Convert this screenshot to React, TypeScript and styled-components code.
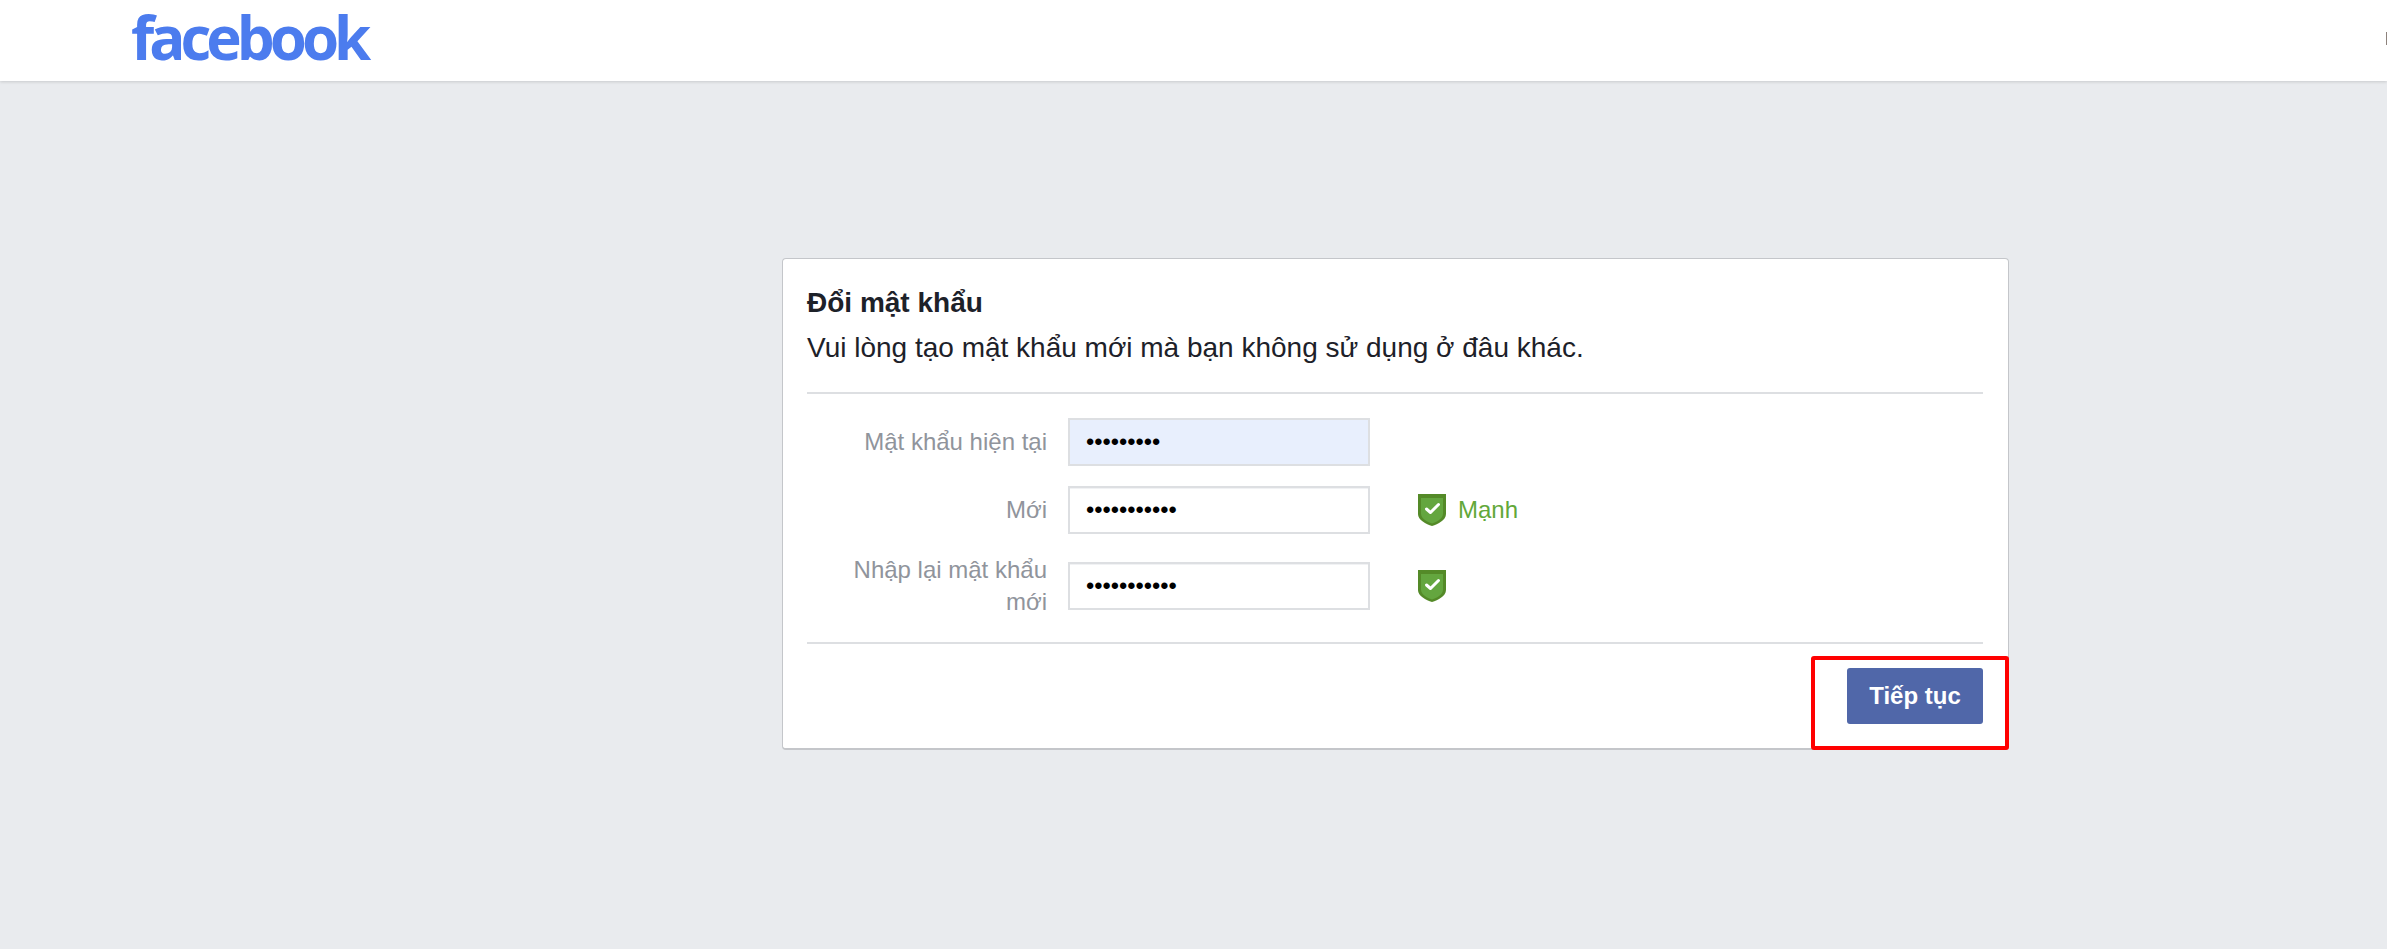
import React from 'react';
import styled, { createGlobalStyle } from 'styled-components';

const GlobalStyle = createGlobalStyle`
  html, body {
    margin: 0;
    padding: 0;
    background-color: #e9ebee;
    font-family: 'Liberation Sans', Arial, sans-serif;
  }
`;

const ShieldIcon: React.FC = () => (
  <ShieldSvg viewBox="0 0 28 32" aria-hidden="true">
    <path d="M0 0H28V20C28 26 20 30 14 32C8 30 0 26 0 20Z" fill="#548a28" />
    <path d="M3 4H25V19.5C25 24.5 19 28 14 29.5C9 28 3 24.5 3 19.5Z" fill="#64a63f" />
    <path d="M8.5 15L12.5 18.5L20.5 10.5" fill="none" stroke="#fff" strokeWidth="3" strokeLinecap="round" strokeLinejoin="round" />
  </ShieldSvg>
);

type PasswordRowProps = {
  label: string;
  value: string;
  autofilled?: boolean;
  checked?: boolean;
  hint?: string;
};

const PasswordRow: React.FC<PasswordRowProps> = ({ label, value, autofilled, checked, hint }) => (
  <Row>
    <Label>{label}</Label>
    <Input type="password" value={value} readOnly autofilled={autofilled} aria-label={label} />
    {checked && (
      <Status>
        <ShieldIcon />
        {hint && <Hint>{hint}</Hint>}
      </Status>
    )}
  </Row>
);

const App: React.FC = () => {
  return (
    <>
      <GlobalStyle />
      <Header>
        <Logo>facebook</Logo>
        <AvatarEdge />
      </Header>
      <Main>
        <Card>
          <Intro>
            <Title>Đổi mật khẩu</Title>
            <Subtitle>Vui lòng tạo mật khẩu mới mà bạn không sử dụng ở đâu khác.</Subtitle>
          </Intro>
          <Form>
            <PasswordRow label="Mật khẩu hiện tại" value="123456789" autofilled />
            <PasswordRow label="Mới" value="12345678901" checked hint="Mạnh" />
            <PasswordRow label="Nhập lại mật khẩu mới" value="12345678901" checked />
          </Form>
          <Footer>
            <SubmitButton type="button">Tiếp tục</SubmitButton>
          </Footer>
          <Highlight />
        </Card>
      </Main>
    </>
  );
};

export default App;

const Header = styled.header`
  height: 81px;
  padding-left: 131px;
  display: flex;
  align-items: flex-start;
  justify-content: space-between;
  background-color: #fff;
  box-shadow: 0 1px 3px rgba(0, 0, 0, 0.14);
  position: relative;
`;

const Logo = styled.div`
  font-family: 'Open Sans', sans-serif;
  font-size: 60px;
  line-height: 74px;
  font-weight: 700;
  letter-spacing: -5px;
  color: #4c7cee;
`;

const AvatarEdge = styled.div`
  width: 1px;
  height: 13px;
  margin-top: 32px;
  background-color: #8d827c;
`;

const Main = styled.main`
  height: 868px;
  padding: 177px 0 0 782px;
  box-sizing: border-box;
  overflow: hidden;
`;

const Card = styled.section`
  position: relative;
  width: 1227px;
  box-sizing: border-box;
  background-color: #fff;
  border: 1px solid #c4c6ca;
  border-bottom-width: 2px;
  border-radius: 4px;
  padding: 0 25px 0 24px;
`;

const Intro = styled.div`
  padding-top: 27px;
  height: 135px;
  box-sizing: border-box;
  border-bottom: 2px solid #dddfe2;
`;

const Title = styled.h2`
  margin: 0;
  font-size: 28px;
  line-height: 34px;
  font-weight: 700;
  color: #1d2129;
`;

const Subtitle = styled.p`
  margin: 11px 0 0;
  font-size: 28px;
  line-height: 34px;
  color: #1d2129;
`;

const Form = styled.form`
  padding: 24px 0;
  display: flex;
  flex-direction: column;
  gap: 20px;
  border-bottom: 2px solid #dddfe2;
`;

const Row = styled.div`
  display: flex;
  align-items: center;
  padding-left: 30px;
`;

const Label = styled.label`
  width: 210px;
  flex-shrink: 0;
  text-align: right;
  font-size: 24px;
  line-height: 32px;
  color: #90949c;
`;

const Input = styled.input<{ autofilled?: boolean }>`
  width: 302px;
  height: 48px;
  margin-left: 21px;
  padding: 0 16px;
  box-sizing: border-box;
  border: 2px solid #dddfe2;
  border-radius: 0;
  outline: none;
  font-family: 'Liberation Sans', Arial, sans-serif;
  font-size: 23.6px;
  color: #000;
  background-color: ${(props) => (props.autofilled ? '#e8effd' : '#fff')};
  box-shadow: ${(props) => (props.autofilled ? 'none' : 'inset 0 1px 0 #f1f2f4')};
`;

const Status = styled.div`
  margin-left: 48px;
  display: flex;
  align-items: center;
  gap: 12px;
`;

const ShieldSvg = styled.svg`
  width: 28px;
  height: 32px;
  display: block;
`;

const Hint = styled.span`
  font-size: 24px;
  line-height: 32px;
  color: #62a83a;
`;

const Footer = styled.div`
  padding: 24px 0;
  display: flex;
  justify-content: flex-end;
`;

const SubmitButton = styled.button`
  width: 136px;
  height: 56px;
  padding: 0;
  border: none;
  border-radius: 3px;
  background-color: #5067a9;
  color: #fff;
  font-family: 'Liberation Sans', Arial, sans-serif;
  font-size: 24px;
  font-weight: 700;
  cursor: pointer;
`;

const Highlight = styled.div`
  position: absolute;
  right: -1px;
  bottom: -2px;
  width: 198px;
  height: 94px;
  box-sizing: border-box;
  border: 4px solid #f00;
  border-radius: 3px;
  pointer-events: none;
`;
